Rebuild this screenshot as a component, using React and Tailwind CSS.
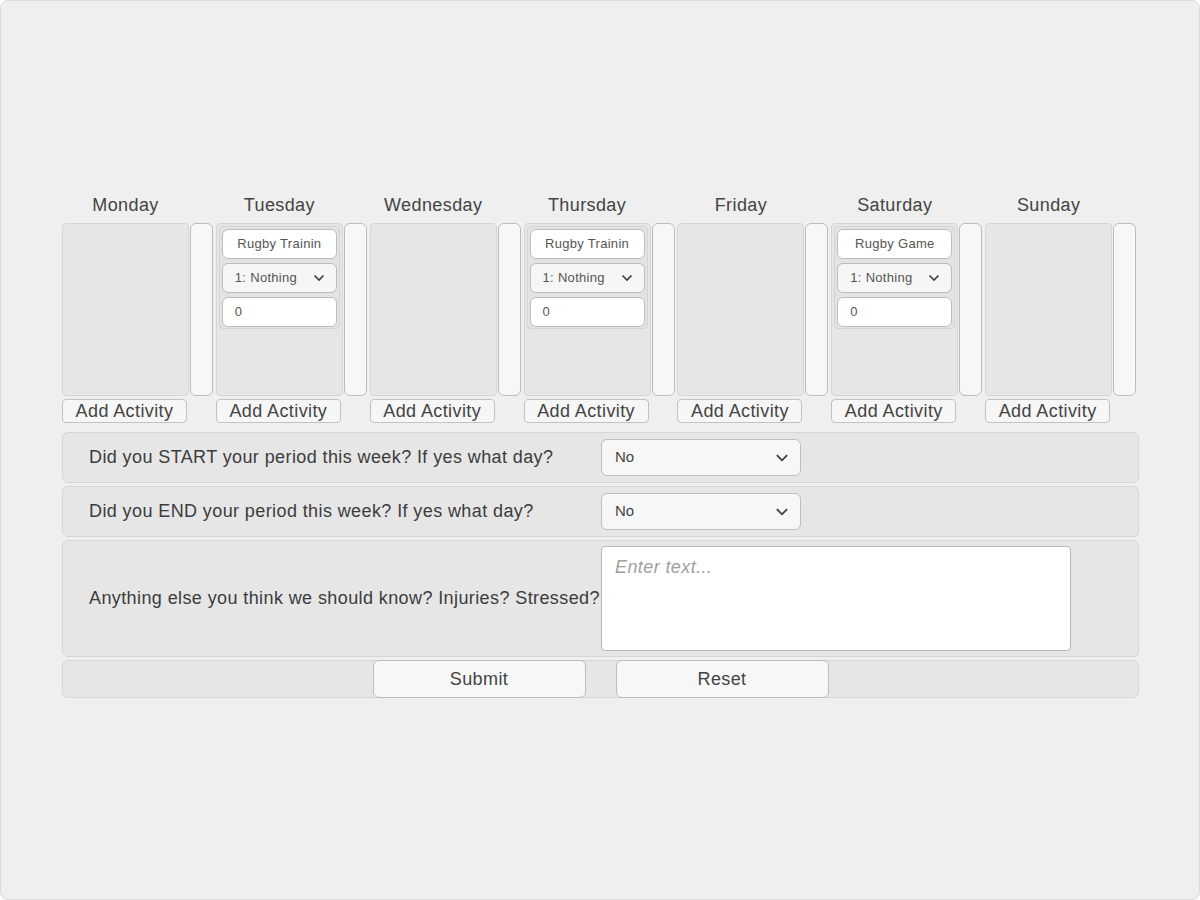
import React, { useState } from "react";

const days = [
  { name: "Monday", activity: null },
  { name: "Tuesday", activity: "Rugby Trainin" },
  { name: "Wednesday", activity: null },
  { name: "Thursday", activity: "Rugby Trainin" },
  { name: "Friday", activity: null },
  { name: "Saturday", activity: "Rugby Game" },
  { name: "Sunday", activity: null },
];

function Chevron({ size = 14 }) {
  return (
    <svg width={size} height={size} viewBox="0 0 14 14" fill="none">
      <polyline points="2.5,4.5 7,9 11.5,4.5" stroke="#3c3c3c" strokeWidth="1.6" />
    </svg>
  );
}

function ActivityItem({ name }) {
  return (
    <div className="m-[2px] flex flex-col gap-[4px] rounded-sm border border-[#d4d4d4] bg-[#e3e3e3] p-[2px] pb-[1px]">
      <div className="flex h-[30px] items-center justify-center rounded-md border border-[#bdbdbd] bg-white text-[13px] tracking-[0.3px] text-[#555]">
        {name}
      </div>
      <div className="flex h-[30px] items-center justify-between rounded-md border border-[#bdbdbd] bg-[#f6f6f6] pl-[12px] pr-[10px] text-[13px] tracking-[0.3px] text-[#555]">
        <span>1: Nothing</span>
        <Chevron />
      </div>
      <div className="flex h-[30px] items-center rounded-md border border-[#bdbdbd] bg-white pl-[12px] text-[13px] text-[#555]">
        0
      </div>
    </div>
  );
}

function DayColumn({ day }) {
  return (
    <div className="flex flex-col">
      <div className="h-[28px] w-[127px] -mt-[3px] mb-[3px] text-center text-[18px] tracking-[0.4px] text-[#444]">{day.name}</div>
      <div className="flex gap-[1px]">
        <div className="h-[173px] w-[127px] rounded-sm border border-[#d6d6d6] bg-[#e6e6e6]">
          {day.activity && <ActivityItem name={day.activity} />}
        </div>
        <div className="h-[173px] w-[23px] rounded-md border border-[#bcbcbc] bg-[#f7f7f7]" />
      </div>
      <button className="mt-[3px] h-[24px] w-[125px] rounded-sm border border-[#c2c2c2] bg-[#f6f6f6] text-[18px] leading-[22px] tracking-[0.4px] text-[#444]">
        Add Activity
      </button>
    </div>
  );
}

function SelectBox() {
  return (
    <div className="flex h-[37px] w-[200px] items-center justify-between rounded-md border border-[#bdbdbd] bg-[#f7f7f7] pl-[13px] pr-[10px] text-[15px] text-[#444]">
      <span>No</span>
      <Chevron size={16} />
    </div>
  );
}

export default function App() {
  const [notes, setNotes] = useState("");

  return (
    <div
      className="h-[900px] w-[1200px] overflow-hidden rounded-lg border border-[#dcdcdc] bg-[#efefef]"
      style={{ fontFamily: '"Liberation Sans", Arial, sans-serif' }}
    >
      <div className="ml-[61px] w-[1077px] pt-[194px]">
        {/* week columns */}
        <div className="grid grid-cols-7">
          {days.map((d) => (
            <DayColumn key={d.name} day={d} />
          ))}
        </div>

        {/* questions */}
        <div className="mt-[9px] flex flex-col gap-[3px]">
          <div className="flex h-[51px] items-center rounded-md border border-[#d6d6d6] bg-[#e6e6e6]">
            <div className="w-[538px] pl-[26px] text-[18px] tracking-[0.4px] text-[#3c3c3c]">
              Did you START your period this week? If yes what day?
            </div>
            <SelectBox />
          </div>
          <div className="flex h-[51px] items-center rounded-md border border-[#d6d6d6] bg-[#e6e6e6]">
            <div className="w-[538px] pl-[26px] text-[18px] tracking-[0.4px] text-[#3c3c3c]">
              Did you END your period this week? If yes what day?
            </div>
            <SelectBox />
          </div>
          <div className="flex h-[117px] items-center rounded-md border border-[#d6d6d6] bg-[#e6e6e6]">
            <div className="w-[538px] whitespace-nowrap pl-[26px] text-[18px] tracking-[0.4px] text-[#3c3c3c]">
              Anything else you think we should know? Injuries? Stressed?
            </div>
            <textarea
              value={notes}
              onChange={(e) => setNotes(e.target.value)}
              placeholder="Enter text..."
              className="h-[105px] w-[470px] resize-none rounded-sm border border-[#b8b8b8] bg-white px-[13px] py-[7px] text-[18px] italic tracking-[0.4px] text-[#444] outline-none placeholder:text-[#a0a0a0]"
            />
          </div>
          <div className="flex h-[38px] items-start justify-center gap-[30px] rounded-md border border-[#d6d6d6] bg-[#e6e6e6]">
            <button className="-mt-[1px] h-[38px] w-[213px] rounded-md border border-[#bdbdbd] bg-[#f7f7f7] text-[18px] tracking-[0.4px] text-[#444]">
              Submit
            </button>
            <button className="-mt-[1px] h-[38px] w-[213px] rounded-md border border-[#bdbdbd] bg-[#f7f7f7] text-[18px] tracking-[0.4px] text-[#444]">
              Reset
            </button>
          </div>
        </div>
      </div>
    </div>
  );
}
